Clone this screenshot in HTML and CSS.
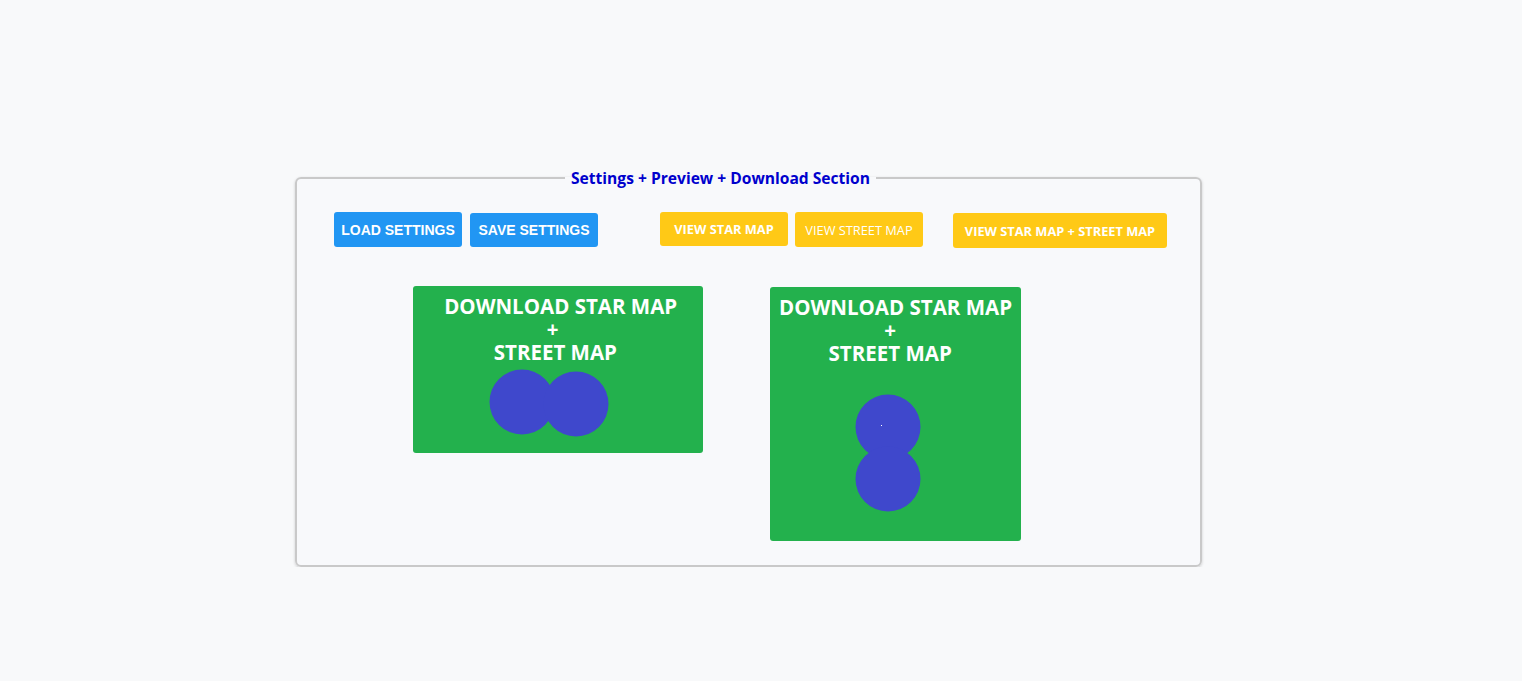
FILE: index.html
```html
<!DOCTYPE html>
<html>
<head>
<meta charset="utf-8">
<link rel="stylesheet" href="styles.css">
</head>
<body>
<div class="page">
  <fieldset class="panel">
    <legend class="panel-title">Settings + Preview + Download Section</legend>
    <div class="toolbar">
      <button class="btn btn-blue">LOAD SETTINGS</button>
      <button class="btn btn-blue btn-save">SAVE SETTINGS</button>
      <button class="btn btn-yellow btn-star">VIEW STAR MAP</button>
      <button class="btn btn-yellow btn-street">VIEW STREET MAP</button>
      <button class="btn btn-yellow btn-both">VIEW STAR MAP + STREET MAP</button>
    </div>
    <div class="downloads">
      <div class="dl dl-wide">
        <div class="dl-text">&nbsp;DOWNLOAD STAR MAP<br>+&nbsp;&nbsp;<br>STREET MAP&nbsp;</div>
        <svg class="rings rings-h" width="120" height="68" viewBox="0 0 120 68">
          <circle cx="33" cy="33" r="32.5" fill="#3f48cc"/>
          <circle cx="87" cy="35" r="32.5" fill="#3f48cc"/>
        </svg>
      </div>
      <div class="dl dl-tall">
        <div class="dl-text">DOWNLOAD STAR MAP<br>+&nbsp;&nbsp;<br>STREET MAP&nbsp;&nbsp;</div>
        <svg class="rings rings-v" width="66" height="118" viewBox="0 0 66 118">
          <circle cx="33" cy="33" r="32.5" fill="#3f48cc"/>
          <circle cx="33" cy="85" r="32.5" fill="#3f48cc"/>
          <rect x="26" y="31" width="1" height="1" fill="#ffffff"/>
        </svg>
      </div>
    </div>
  </fieldset>
</div>
</body>
</html>
```
FILE: styles.css
```css
html, body {
  margin: 0;
  padding: 0;
}
body {
  background: #f8f9fa;
  font-family: "Open Sans", "Liberation Sans", sans-serif;
}
.page {
  padding: 167px 0 0 295px;
}
.panel {
  box-sizing: border-box;
  width: 907px;
  min-width: 0;
  margin: 0;
  padding: 23px 30px 24px 37px;
  border: 2px solid #c9c9c9;
  border-radius: 6px;
  box-shadow: 0 1px 3px rgba(0, 0, 0, 0.18);
  background: #f8f9fb;
}
.panel-title {
  margin: 0 0 0 231px;
  padding: 0 6px;
  font-size: 15.6px;
  font-weight: 700;
  line-height: 22px;
  color: #0000cd;
}
.toolbar {
  display: flex;
  align-items: flex-start;
}
.btn {
  box-sizing: border-box;
  width: 128px;
  height: 35px;
  margin: 0;
  padding: 0;
  border: none;
  border-radius: 3px;
  color: #ffffff;
  text-align: center;
  cursor: pointer;
}
.btn-blue {
  background: #2196f3;
  font-family: "Liberation Sans", Arial, sans-serif;
  font-weight: 700;
  font-size: 14px;
}
.btn-save {
  margin-left: 8px;
  margin-top: 1px;
  height: 34px;
}
.btn-yellow {
  background: #ffc916;
  font-family: "Open Sans", sans-serif;
  font-size: 12.8px;
  font-weight: 700;
}
.btn-star {
  margin-left: 62px;
  height: 34px;
}
.btn-street {
  margin-left: 7px;
  font-weight: 400;
}
.btn-both {
  margin-left: 30px;
  margin-top: 1px;
  width: 214px;
}
.downloads {
  display: flex;
  align-items: flex-start;
  margin-top: 38px;
  padding-left: 79px;
}
.dl {
  box-sizing: border-box;
  background: #23b14d;
  border-radius: 3px;
  padding-top: 9px;
  color: #ffffff;
}
.dl-wide {
  width: 290px;
  height: 167px;
}
.dl-tall {
  width: 251px;
  height: 254px;
  margin-left: 67px;
  margin-top: 1px;
}
.dl-text {
  font-size: 20.5px;
  font-weight: 700;
  line-height: 23px;
  text-align: center;
}
.rings {
  display: block;
}
.rings-h {
  margin: 5px 0 0 76px;
}
.rings-v {
  margin: 29px 0 0 85px;
}
```
